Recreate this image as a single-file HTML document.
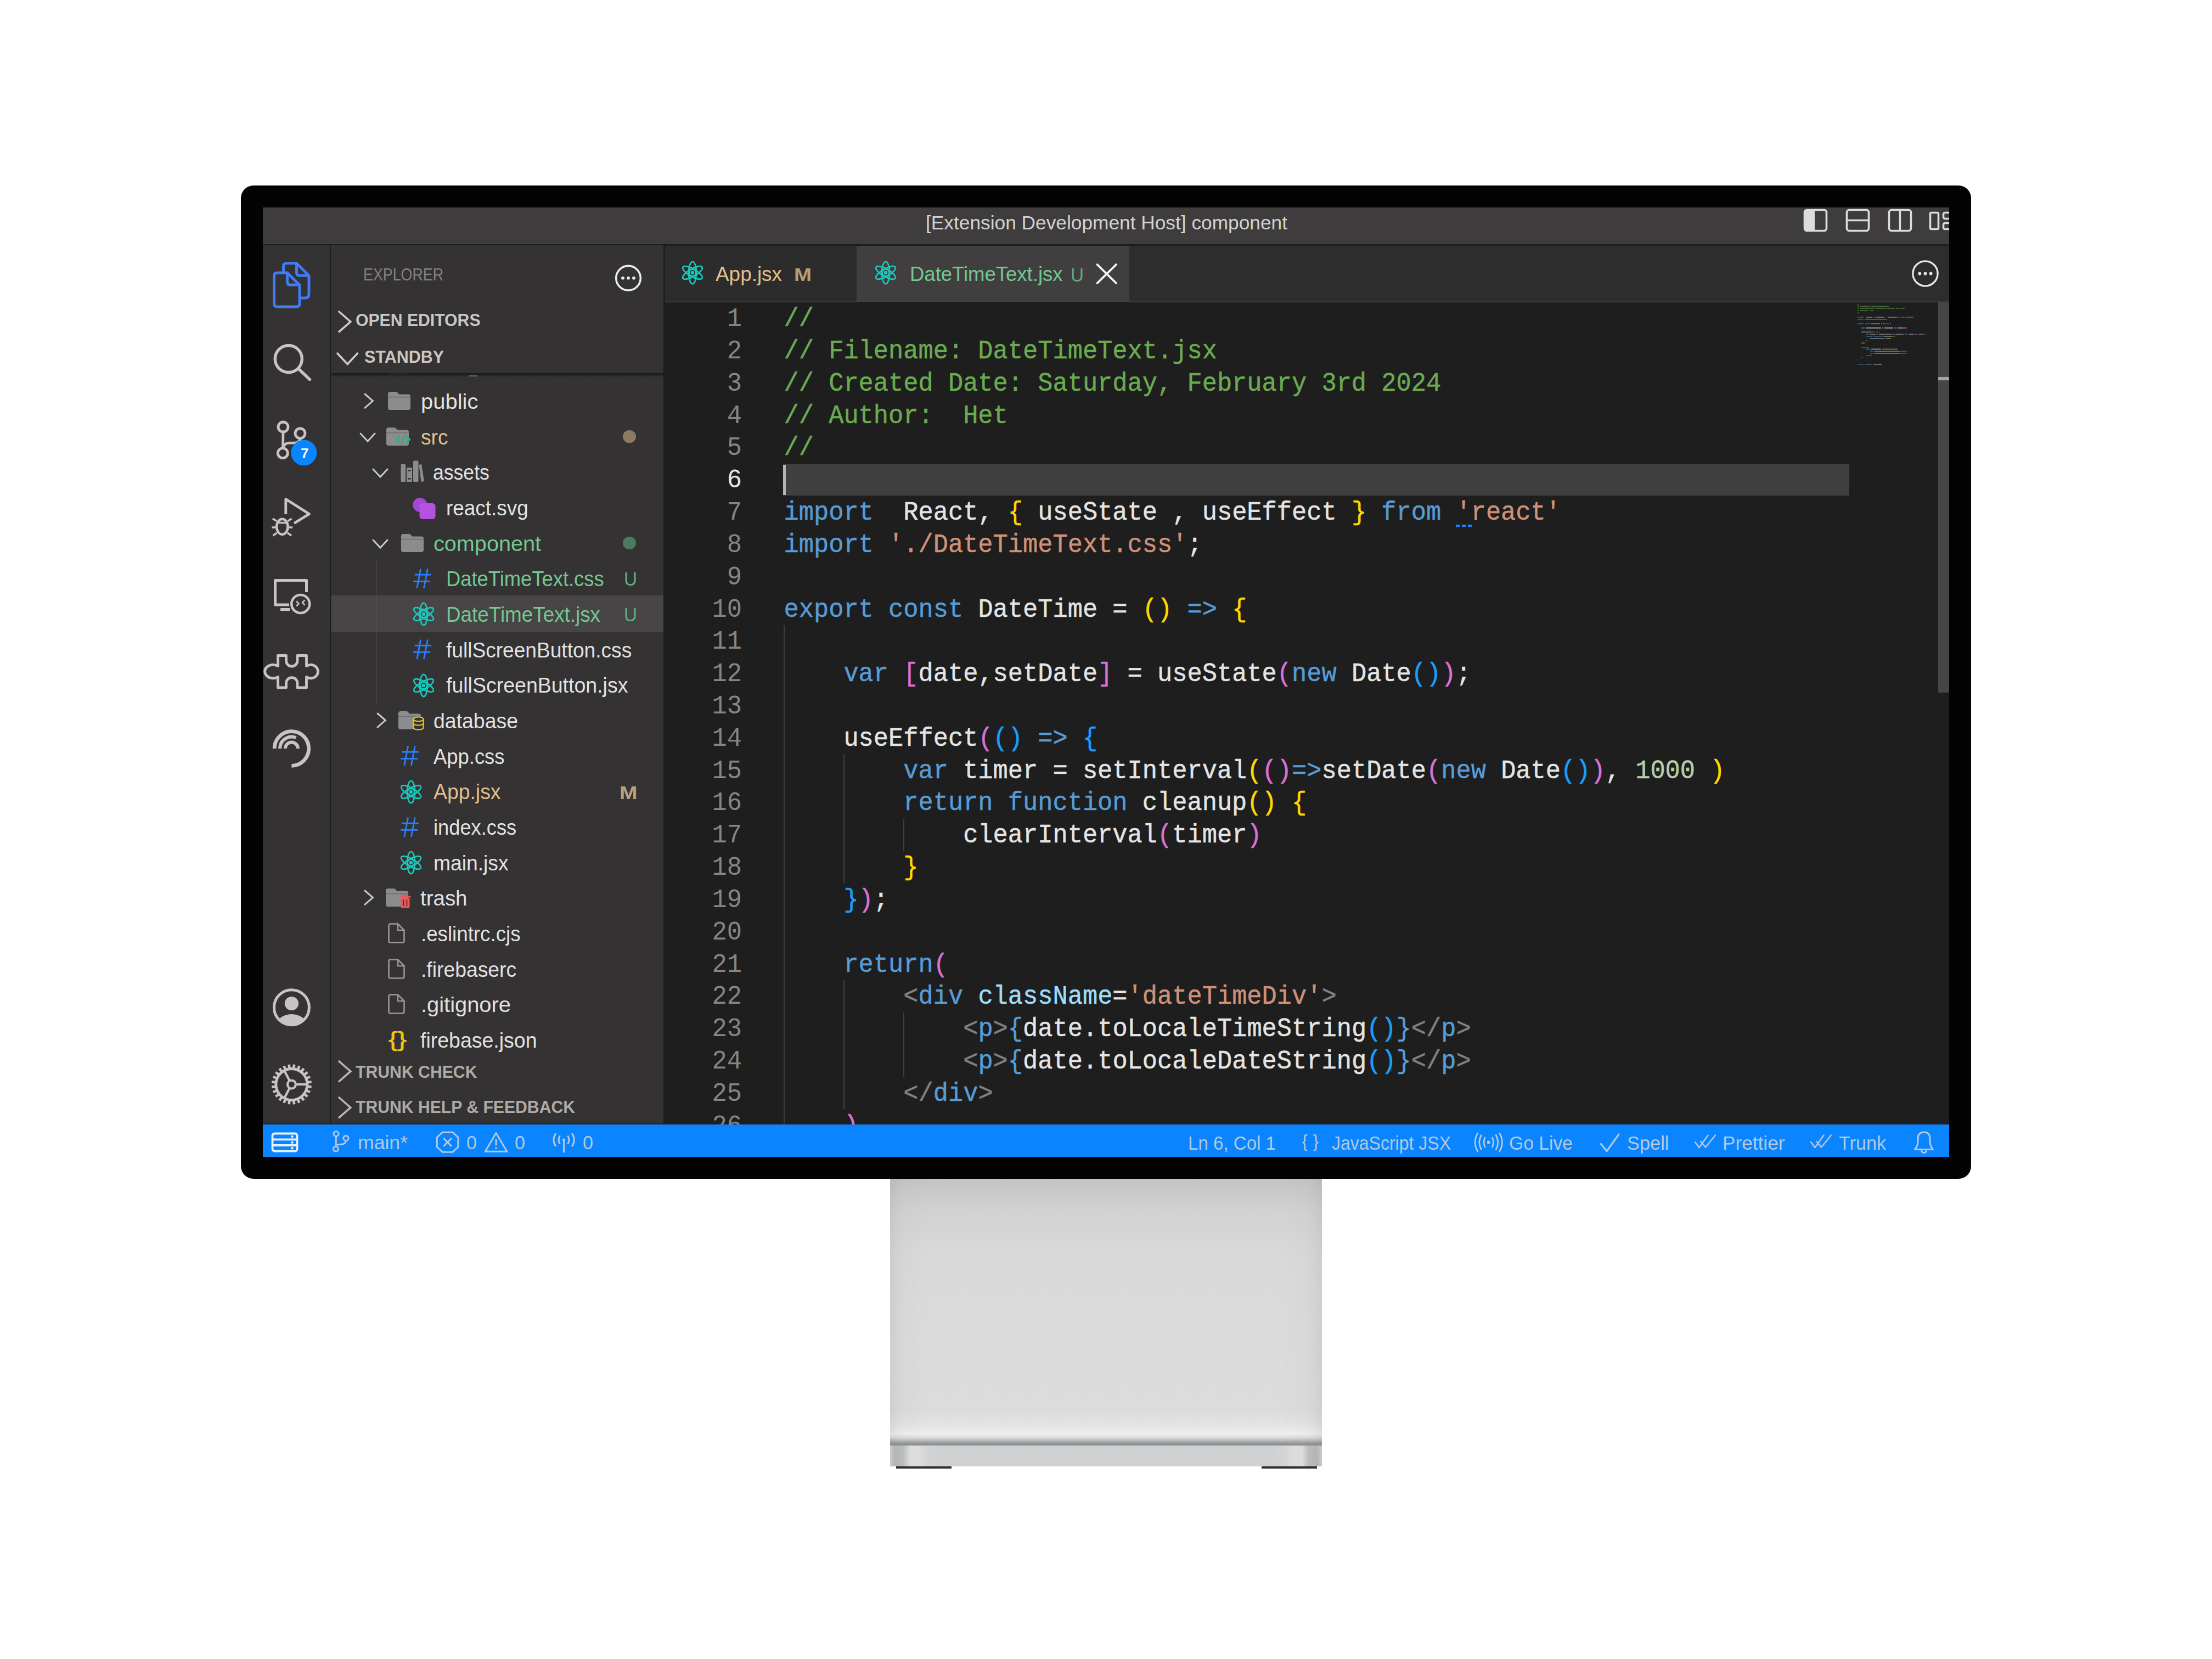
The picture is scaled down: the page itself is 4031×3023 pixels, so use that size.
<!DOCTYPE html>
<html lang="en"><head><meta charset="utf-8"><title>component - Visual Studio Code</title>
<style>
html,body{margin:0;padding:0;background:#fff}
body{width:4031px;height:3023px;position:relative;overflow:hidden;font-family:"Liberation Sans",sans-serif}
.b{position:absolute;display:block}
.t{position:absolute;white-space:pre;line-height:1;transform-origin:0 0;display:block}
.c{position:absolute;left:1428.5px;white-space:pre;line-height:1;font-family:"Liberation Mono",monospace;font-size:45.362px;-webkit-text-stroke:.5px;transform:scaleY(1.07);transform-origin:0 76.68%}
.n{position:absolute;left:1211.5px;width:140.5px;text-align:right;white-space:pre;line-height:1;font-family:"Liberation Mono",monospace;font-size:45.362px;color:#858585;transform:scaleY(1.07);transform-origin:0 76.68%}
</style></head>
<body>
<div class="b" style="left:1622px;top:2140px;width:787px;height:491px;background:linear-gradient(180deg,#bfc0c1 0%,#c6c7c8 4%,#d2d2d3 14%,#d9d9da 30%,#dbdbdc 60%,#dcdcdd 88%,#e4e4e4 93%,#efefef 96.3%,#dadada 97.8%,#a6a7a8 99.3%,#8f9192 100%);"></div>
<div class="b" style="left:1622px;top:2140px;width:787px;height:491px;background:linear-gradient(90deg,rgba(120,120,122,.13) 0%,rgba(150,150,152,.05) 3%,rgba(255,255,255,0) 9%,rgba(255,255,255,0) 91%,rgba(150,150,152,.05) 97%,rgba(120,120,122,.13) 100%);"></div>
<div class="b" style="left:1622px;top:2631px;width:787px;height:41px;background:linear-gradient(90deg,#c9cacb 0%,#b3b5b6 1.2%,#b9bbbc 3%,#dbdcdc 4.6%,#dcdcdd 6.5%,#d2d3d4 9%,#cfd0d1 13%,#cfd0d1 87%,#d2d3d4 91%,#dcdcdd 93.5%,#dbdcdc 95.4%,#b9bbbc 97%,#b3b5b6 98.8%,#c9cacb 100%);"></div>
<div class="b" style="left:1622px;top:2631px;width:787px;height:3px;background:#8f9091;"></div>
<div class="b" style="left:1633px;top:2672px;width:101px;height:4px;background:#2e2e30;"></div>
<div class="b" style="left:2299px;top:2672px;width:101px;height:4px;background:#2e2e30;"></div>
<div class="b" style="left:439px;top:338px;width:3153px;height:1810px;background:#030303;border-radius:23px;"></div>
<div class="b" style="left:479.3px;top:378px;width:3072.3px;height:1729.6px;background:#1e1e1e;"></div>
<div class="b" style="left:479.3px;top:378px;width:3072.3px;height:67px;background:#3e3c3d;"></div>
<div class="b" style="left:479.3px;top:445px;width:3072.3px;height:2.4px;background:#1f1e1e;"></div>
<div class="b" style="left:479.3px;top:447.4px;width:121.4px;height:1601.6px;background:#343233;"></div>
<div class="b" style="left:600.7px;top:447.4px;width:2.1px;height:1601.6px;background:#1f1e1e;"></div>
<div class="b" style="left:602.8px;top:447.4px;width:606.2px;height:1601.6px;background:#343233;"></div>
<div class="b" style="left:1208.8px;top:447.4px;width:2.7px;height:1601.6px;background:#1b1a1a;"></div>
<div class="b" style="left:1211.5px;top:447.5px;width:2340px;height:102.5px;background:#2d2d2d;"></div>
<div class="b" style="left:1211.5px;top:548.5px;width:2340px;height:2.5px;background:#3a3939;"></div>
<div class="b" style="left:1211.5px;top:447.5px;width:349.5px;height:101px;background:#2c2c2c;"></div>
<div class="b" style="left:1561px;top:447.5px;width:497px;height:102px;background:#403e3f;"></div>
<div class="b" style="left:1561px;top:549.5px;width:497px;height:1.5px;background:#2a2929;"></div>
<div class="b" style="left:479.3px;top:2047px;width:732px;height:2.2px;background:#232222;"></div>
<div class="b" style="left:479.3px;top:2049px;width:3072.3px;height:58.6px;background:#0a84ff;"></div>
<svg class="b" style="left:490px;top:470px" width="85" height="100" viewBox="490 470 85 100"><g fill="none" stroke="#3f7cf6" stroke-width="4.9" stroke-linejoin="round" stroke-linecap="round"><path d="M516.5 494 L516.5 485 Q516.5 479.8 522 479.8 L540.5 479.8 L563 502.5 L563 536 Q563 543 556 543 L550 543"/><path d="M540.5 480.5 L540.5 497 Q540.5 502 545.5 502 L562 502"/><path d="M505.5 497 L523.5 497 L546 519.5 L546 553 Q546 559 540 559 L505.5 559 Q499.5 559 499.5 553 L499.5 503 Q499.5 497 505.5 497 Z"/><path d="M523.5 497.5 L523.5 514 Q523.5 519 528.5 519 L545.5 519"/></g></svg>
<svg class="b" style="left:490px;top:620px" width="90" height="80" viewBox="490 620 90 80"><g fill="none" stroke="#c7c5c3" stroke-width="5.4" stroke-linecap="round"><circle cx="525.8" cy="654" r="24.5"/><path d="M544 672 L564.5 691.5"/></g></svg>
<svg class="b" style="left:495px;top:760px" width="90" height="95" viewBox="495 760 90 95"><g fill="none" stroke="#c7c5c3" stroke-width="4.8"><circle cx="516" cy="778" r="9"/><circle cx="547" cy="789.6" r="9"/><circle cx="515.3" cy="825.7" r="9"/><path d="M516 787 L515.5 816.5"/><path d="M547.3 798.6 Q546 807.2 536 807.2 L527 807.2 Q517 807.6 516 817"/></g><circle cx="553.8" cy="825" r="23.5" fill="#0a84ff"/></svg>
<svg class="b" style="left:490px;top:895px" width="90" height="90" viewBox="490 895 90 90"><g fill="none" stroke="#c7c5c3" stroke-width="4.8" stroke-linejoin="round" stroke-linecap="butt"><path d="M520.8 937 L520.8 909.5 L563.5 936.5 L536 953.5"/><ellipse cx="514.3" cy="959.8" rx="10.2" ry="14" stroke-width="4.4"/><path d="M504 949.5 L497 945 M504 961 L495.5 961 M504.5 971 L497.5 976 M524.5 949.5 L531.5 945 M524.5 961 L533 961 M524 971 L531 976" stroke-width="3.6"/><path d="M505 952.5 L523.5 952.5" stroke-width="3.4"/></g></svg>
<svg class="b" style="left:490px;top:1045px" width="90" height="80" viewBox="490 1045 90 80"><g fill="none" stroke="#c7c5c3" stroke-width="5" stroke-linejoin="round"><path d="M527 1102 L501.5 1102 L501.5 1057.5 L558.5 1057.5 L558.5 1079"/><path d="M511 1110.5 L528 1110.5"/><circle cx="547.7" cy="1100.5" r="16.5" stroke-width="4.6"/><path d="M540 1095.5 L544.5 1100 L540 1104.5 M555.5 1093.5 L551 1098 L555.5 1102.5" stroke-width="2.6"/></g></svg>
<svg class="b" style="left:475px;top:1183px" width="115" height="80" viewBox="475 1183 115 80"><path fill="none" stroke="#c7c5c3" stroke-width="4.8" stroke-linejoin="round" d="M506.5 1194.5 L521.5 1194.5 L521.5 1204 A10.2 10.2 0 0 0 541.9 1204 L541.9 1194.5 L558.5 1194.5 L558.5 1213.7 A13.2 12.3 0 1 1 558.5 1233.5 L558.5 1253 L541.9 1253 L541.9 1244.8 A10.2 10.2 0 0 0 521.5 1244.8 L521.5 1253 L506.5 1253 L506.5 1233.5 A15 12.3 0 1 1 506.5 1213.7 Z"/></svg>
<svg class="b" style="left:490px;top:1320px" width="90" height="90" viewBox="490 1320 90 90"><path d="M500.1 1364.0 A31.3 31.3 0 1 1 531.4 1395.3" fill="none" stroke="#c7c5c3" stroke-width="6.8"/><path d="M510.1 1364.0 A21.3 21.3 0 0 1 539.4 1344.3" fill="none" stroke="#c7c5c3" stroke-width="6"/><path d="M519.8 1364.0 A11.6 11.6 0 0 1 543.0 1364.0" fill="none" stroke="#c7c5c3" stroke-width="6"/></svg>
<svg class="b" style="left:490px;top:1795px" width="85" height="85" viewBox="490 1795 85 85"><defs><clipPath id="acc"><circle cx="531.4" cy="1835.7" r="30"/></clipPath></defs><circle cx="531.4" cy="1835.7" r="32" fill="none" stroke="#c7c5c3" stroke-width="5"/><circle cx="531.4" cy="1828.5" r="12.6" fill="#c7c5c3"/><ellipse cx="531.4" cy="1871" rx="29" ry="23" fill="#c7c5c3" clip-path="url(#acc)"/></svg>
<svg class="b" style="left:490px;top:1935px" width="85" height="85" viewBox="490 1935 85 85"><g fill="none" stroke="#c7c5c3"><circle cx="531.4" cy="1976" r="28.5" stroke-width="4.8"/><path d="M561.1 1979.9 L567.6 1980.8 M559.1 1987.5 L565.1 1990.0 M555.2 1994.3 L560.4 1998.2 M549.7 1999.8 L553.6 2005.0 M542.9 2003.7 L545.4 2009.7 M535.3 2005.7 L536.2 2012.2 M527.5 2005.7 L526.6 2012.2 M519.9 2003.7 L517.4 2009.7 M513.1 1999.8 L509.2 2005.0 M507.6 1994.3 L502.4 1998.2 M503.7 1987.5 L497.7 1990.0 M501.7 1979.9 L495.2 1980.8 M501.7 1972.1 L495.2 1971.2 M503.7 1964.5 L497.7 1962.0 M507.6 1957.7 L502.4 1953.8 M513.1 1952.2 L509.2 1947.0 M519.9 1948.3 L517.4 1942.3 M527.5 1946.3 L526.6 1939.8 M535.3 1946.3 L536.2 1939.8 M542.9 1948.3 L545.4 1942.3 M549.7 1952.2 L553.6 1947.0 M555.2 1957.7 L560.4 1953.8 M559.1 1964.5 L565.1 1962.0 M561.1 1972.1 L567.6 1971.2 " stroke-width="4.6"/><circle cx="531.4" cy="1976" r="7.5" stroke-width="4"/><path d="M539.4 1976.0 L559.4 1976.0 M527.6 1983.1 L518.3 2000.7 M527.6 1968.9 L518.3 1951.3 " stroke-width="4.2"/></g></svg>
<svg class="b" style="left:1119px;top:481px" width="52" height="52" viewBox="0 0 52 52"><circle cx="26" cy="25.7" r="22.3" fill="none" stroke="#ececec" stroke-width="3.6"/><circle cx="16" cy="25.7" r="2.9" fill="#ececec"/><circle cx="26" cy="25.7" r="2.9" fill="#ececec"/><circle cx="36" cy="25.7" r="2.9" fill="#ececec"/></svg>
<svg class="b" style="left:614.6px;top:564.8px" width="26.8" height="42.4" viewBox="0 0 26.8 42.4"><path d="M3 3 L23.8 21.2 L3 39.4" fill="none" stroke="#cfcbc6" stroke-width="3.6" stroke-linecap="round" stroke-linejoin="miter"/></svg>
<svg class="b" style="left:611.8px;top:640.75px" width="42.4" height="25.5" viewBox="0 0 42.4 25.5"><path d="M3 3 L21.2 22.5 L39.4 3" fill="none" stroke="#cfcbc6" stroke-width="3.6" stroke-linecap="round" stroke-linejoin="miter"/></svg>
<div class="b" style="left:603.5px;top:680px;width:605.5px;height:7px;background:linear-gradient(180deg,#1c1b1b 0%,#242323 50%,rgba(52,50,51,0) 100%);"></div>
<div class="b" style="left:711px;top:680.6px;width:34px;height:1.8px;background:#5e5c5b;"></div>
<div class="b" style="left:853.5px;top:684.3px;width:16.5px;height:2px;background:#6b6967;"></div>
<div class="b" style="left:603.5px;top:1084.5px;width:605.5px;height:67px;background:#474546;"></div>
<div class="b" style="left:684.7px;top:1021px;width:1.7px;height:260px;background:#565455;"></div>
<svg class="b" style="left:661.8px;top:715.1px" width="20.4" height="31.2" viewBox="0 0 20.4 31.2"><path d="M3 3 L17.4 15.6 L3 28.2" fill="none" stroke="#c9c9c9" stroke-width="3" stroke-linecap="round" stroke-linejoin="miter"/></svg>
<svg class="b" style="left:707px;top:714.1px" width="41" height="33" viewBox="0 0 41 33"><path d="M0 4 Q0 0 4 0 L14 0 Q17 0 18.5 2.2 L20 4.5 L37 4.5 Q41 4.5 41 8.5 L41 29 Q41 33 37 33 L4 33 Q0 33 0 29 Z" fill="#8c8c8e"/><path d="M0 9.6 L41 9.6" stroke="#707072" stroke-width="1.6"/></svg>
<svg class="b" style="left:653.98px;top:787.375px" width="32.04" height="19.95" viewBox="0 0 32.04 19.95"><path d="M3 3 L16.02 16.95 L29.04 3" fill="none" stroke="#c9c9c9" stroke-width="3" stroke-linecap="round" stroke-linejoin="miter"/></svg>
<svg class="b" style="left:703.5px;top:778.75px" width="41" height="33" viewBox="0 0 41 33"><path d="M0 4 Q0 0 4 0 L14 0 Q17 0 18.5 2.2 L20 4.5 L37 4.5 Q41 4.5 41 8.5 L41 29 Q41 33 37 33 L4 33 Q0 33 0 29 Z" fill="#8c8c8e"/><path d="M0 9.6 L41 9.6" stroke="#707072" stroke-width="1.6"/></svg>
<div class="b" style="left:1135px;top:783.85px;width:23.5px;height:23.5px;background:#8d7b60;border-radius:50%;"></div>
<svg class="b" style="left:677.48px;top:852.025px" width="32.04" height="19.95" viewBox="0 0 32.04 19.95"><path d="M3 3 L16.02 16.95 L29.04 3" fill="none" stroke="#c9c9c9" stroke-width="3" stroke-linecap="round" stroke-linejoin="miter"/></svg>
<svg class="b" style="left:751px;top:906.65px" width="44" height="40" viewBox="0 0 44 40"><circle cx="14.3" cy="13" r="13" fill="#a744da"/><rect x="13.5" y="10" width="29" height="29" rx="5.5" fill="#b652e2"/></svg>
<svg class="b" style="left:677.48px;top:981.325px" width="32.04" height="19.95" viewBox="0 0 32.04 19.95"><path d="M3 3 L16.02 16.95 L29.04 3" fill="none" stroke="#c9c9c9" stroke-width="3" stroke-linecap="round" stroke-linejoin="miter"/></svg>
<svg class="b" style="left:730.5px;top:972.7px" width="41" height="33" viewBox="0 0 41 33"><path d="M0 4 Q0 0 4 0 L14 0 Q17 0 18.5 2.2 L20 4.5 L37 4.5 Q41 4.5 41 8.5 L41 29 Q41 33 37 33 L4 33 Q0 33 0 29 Z" fill="#8c8c8e"/><path d="M0 9.6 L41 9.6" stroke="#707072" stroke-width="1.6"/></svg>
<div class="b" style="left:1135px;top:977.8px;width:23.5px;height:23.5px;background:#4c7a5d;border-radius:50%;"></div>
<svg class="b" style="left:752.6px;top:1035.95px" width="34" height="37" viewBox="0 0 34 37"><g stroke="#2b7fff" stroke-width="2.8" stroke-linecap="butt" fill="none"><path d="M13.6 0.4 L6.8 36"/><path d="M26.2 0.4 L19.4 36"/><path d="M2.7 11.2 L33 11.2"/><path d="M0 23.4 L31.2 23.4"/></g></svg>
<svg class="b" style="left:748px;top:1094.4px" width="48" height="50" viewBox="0 0 48 50"><g transform="translate(24,25)"><ellipse rx="20.2" ry="7" fill="none" stroke="#1cc7ba" stroke-width="2.7" transform="rotate(90)"/><ellipse rx="20.2" ry="7" fill="none" stroke="#1cc7ba" stroke-width="2.7" transform="rotate(30)"/><ellipse rx="20.2" ry="7" fill="none" stroke="#1cc7ba" stroke-width="2.7" transform="rotate(150)"/><circle r="6.2" fill="none" stroke="#1cc7ba" stroke-width="2.2"/><circle r="3.3" fill="#1cc7ba"/></g></svg>
<svg class="b" style="left:752.6px;top:1165.25px" width="34" height="37" viewBox="0 0 34 37"><g stroke="#2b7fff" stroke-width="2.8" stroke-linecap="butt" fill="none"><path d="M13.6 0.4 L6.8 36"/><path d="M26.2 0.4 L19.4 36"/><path d="M2.7 11.2 L33 11.2"/><path d="M0 23.4 L31.2 23.4"/></g></svg>
<svg class="b" style="left:748px;top:1223.7px" width="48" height="50" viewBox="0 0 48 50"><g transform="translate(24,25)"><ellipse rx="20.2" ry="7" fill="none" stroke="#1cc7ba" stroke-width="2.7" transform="rotate(90)"/><ellipse rx="20.2" ry="7" fill="none" stroke="#1cc7ba" stroke-width="2.7" transform="rotate(30)"/><ellipse rx="20.2" ry="7" fill="none" stroke="#1cc7ba" stroke-width="2.7" transform="rotate(150)"/><circle r="6.2" fill="none" stroke="#1cc7ba" stroke-width="2.2"/><circle r="3.3" fill="#1cc7ba"/></g></svg>
<svg class="b" style="left:685.3px;top:1296.95px" width="20.4" height="31.2" viewBox="0 0 20.4 31.2"><path d="M3 3 L17.4 15.6 L3 28.2" fill="none" stroke="#c9c9c9" stroke-width="3" stroke-linecap="round" stroke-linejoin="miter"/></svg>
<svg class="b" style="left:726px;top:1295.95px" width="41" height="33" viewBox="0 0 41 33"><path d="M0 4 Q0 0 4 0 L14 0 Q17 0 18.5 2.2 L20 4.5 L37 4.5 Q41 4.5 41 8.5 L41 29 Q41 33 37 33 L4 33 Q0 33 0 29 Z" fill="#8c8c8e"/><path d="M0 9.6 L41 9.6" stroke="#707072" stroke-width="1.6"/></svg>
<svg class="b" style="left:729.6px;top:1359.2px" width="34" height="37" viewBox="0 0 34 37"><g stroke="#2b7fff" stroke-width="2.8" stroke-linecap="butt" fill="none"><path d="M13.6 0.4 L6.8 36"/><path d="M26.2 0.4 L19.4 36"/><path d="M2.7 11.2 L33 11.2"/><path d="M0 23.4 L31.2 23.4"/></g></svg>
<svg class="b" style="left:724.5px;top:1417.65px" width="48" height="50" viewBox="0 0 48 50"><g transform="translate(24,25)"><ellipse rx="20.2" ry="7" fill="none" stroke="#1cc7ba" stroke-width="2.7" transform="rotate(90)"/><ellipse rx="20.2" ry="7" fill="none" stroke="#1cc7ba" stroke-width="2.7" transform="rotate(30)"/><ellipse rx="20.2" ry="7" fill="none" stroke="#1cc7ba" stroke-width="2.7" transform="rotate(150)"/><circle r="6.2" fill="none" stroke="#1cc7ba" stroke-width="2.2"/><circle r="3.3" fill="#1cc7ba"/></g></svg>
<svg class="b" style="left:729.6px;top:1488.5px" width="34" height="37" viewBox="0 0 34 37"><g stroke="#2b7fff" stroke-width="2.8" stroke-linecap="butt" fill="none"><path d="M13.6 0.4 L6.8 36"/><path d="M26.2 0.4 L19.4 36"/><path d="M2.7 11.2 L33 11.2"/><path d="M0 23.4 L31.2 23.4"/></g></svg>
<svg class="b" style="left:724.5px;top:1546.95px" width="48" height="50" viewBox="0 0 48 50"><g transform="translate(24,25)"><ellipse rx="20.2" ry="7" fill="none" stroke="#1cc7ba" stroke-width="2.7" transform="rotate(90)"/><ellipse rx="20.2" ry="7" fill="none" stroke="#1cc7ba" stroke-width="2.7" transform="rotate(30)"/><ellipse rx="20.2" ry="7" fill="none" stroke="#1cc7ba" stroke-width="2.7" transform="rotate(150)"/><circle r="6.2" fill="none" stroke="#1cc7ba" stroke-width="2.2"/><circle r="3.3" fill="#1cc7ba"/></g></svg>
<svg class="b" style="left:661.8px;top:1620.2px" width="20.4" height="31.2" viewBox="0 0 20.4 31.2"><path d="M3 3 L17.4 15.6 L3 28.2" fill="none" stroke="#c9c9c9" stroke-width="3" stroke-linecap="round" stroke-linejoin="miter"/></svg>
<svg class="b" style="left:703px;top:1619.2px" width="41" height="33" viewBox="0 0 41 33"><path d="M0 4 Q0 0 4 0 L14 0 Q17 0 18.5 2.2 L20 4.5 L37 4.5 Q41 4.5 41 8.5 L41 29 Q41 33 37 33 L4 33 Q0 33 0 29 Z" fill="#8c8c8e"/><path d="M0 9.6 L41 9.6" stroke="#707072" stroke-width="1.6"/></svg>
<svg class="b" style="left:707px;top:1681.95px" width="31" height="37" viewBox="0 0 31 37"><path d="M4.5 1.5 L18 1.5 L29.5 13 L29.5 32.5 Q29.5 35.5 26.5 35.5 L4.5 35.5 Q1.5 35.5 1.5 32.5 L1.5 4.5 Q1.5 1.5 4.5 1.5 Z" fill="none" stroke="#9a9692" stroke-width="2.6" stroke-linejoin="round"/><path d="M18 1.5 L18 13 L29.5 13" fill="none" stroke="#9a9692" stroke-width="2.6" stroke-linejoin="round"/></svg>
<svg class="b" style="left:707px;top:1746.6px" width="31" height="37" viewBox="0 0 31 37"><path d="M4.5 1.5 L18 1.5 L29.5 13 L29.5 32.5 Q29.5 35.5 26.5 35.5 L4.5 35.5 Q1.5 35.5 1.5 32.5 L1.5 4.5 Q1.5 1.5 4.5 1.5 Z" fill="none" stroke="#9a9692" stroke-width="2.6" stroke-linejoin="round"/><path d="M18 1.5 L18 13 L29.5 13" fill="none" stroke="#9a9692" stroke-width="2.6" stroke-linejoin="round"/></svg>
<svg class="b" style="left:707px;top:1811.25px" width="31" height="37" viewBox="0 0 31 37"><path d="M4.5 1.5 L18 1.5 L29.5 13 L29.5 32.5 Q29.5 35.5 26.5 35.5 L4.5 35.5 Q1.5 35.5 1.5 32.5 L1.5 4.5 Q1.5 1.5 4.5 1.5 Z" fill="none" stroke="#9a9692" stroke-width="2.6" stroke-linejoin="round"/><path d="M18 1.5 L18 13 L29.5 13" fill="none" stroke="#9a9692" stroke-width="2.6" stroke-linejoin="round"/></svg>
<svg class="b" style="left:720px;top:791.85px" width="30" height="18" viewBox="0 0 30 18"><g fill="none" stroke="#28b07c" stroke-width="3" stroke-linecap="round" stroke-linejoin="round"><path d="M8 3 L2 9 L8 15"/><path d="M21 3 L27 9 L21 15"/><path d="M17 2 L12 16"/></g></svg>
<svg class="b" style="left:729.5px;top:838.5px" width="43" height="40" viewBox="0 0 43 40"><g fill="#8c8c8e"><rect x="0.5" y="6.5" width="8.5" height="32.5" rx="1.5"/><rect x="11" y="13" width="10" height="26" rx="1.5"/><rect x="23" y="0.5" width="9.5" height="38.5" rx="2"/><path d="M33.5 8 L38 6.8 L43 38 L37.5 39 Z"/></g><rect x="13.3" y="17" width="5.4" height="2.6" fill="#343233"/><rect x="13.3" y="32" width="5.4" height="2.6" fill="#343233"/></svg>
<svg class="b" style="left:751.5px;top:1305.05px" width="21" height="26" viewBox="0 0 21 26"><g fill="#343233" stroke="#e7c81d" stroke-width="2.2"><path d="M1.5 5.5 L1.5 20.5 Q1.5 24.5 10.5 24.5 Q19.5 24.5 19.5 20.5 L19.5 5.5"/><ellipse cx="10.5" cy="5.5" rx="9" ry="4"/><path d="M1.5 12.5 Q1.5 16.5 10.5 16.5 Q19.5 16.5 19.5 12.5" fill="none"/></g></svg>
<svg class="b" style="left:728px;top:1629.8px" width="21" height="25" viewBox="0 0 21 25"><g fill="#e8585a"><rect x="2.5" y="6" width="16" height="18.5" rx="2.5"/><rect x="0.5" y="2.5" width="20" height="3" rx="1"/><rect x="6.5" y="0" width="8" height="3" rx="1"/></g><g stroke="#343233" stroke-width="1.6"><path d="M7.5 9.5 L7.5 21"/><path d="M13.5 9.5 L13.5 21"/></g></svg>
<svg class="b" style="left:614.6px;top:1931.3px" width="26.8" height="42.4" viewBox="0 0 26.8 42.4"><path d="M3 3 L23.8 21.2 L3 39.4" fill="none" stroke="#b9b5b1" stroke-width="3.6" stroke-linecap="round" stroke-linejoin="miter"/></svg>
<svg class="b" style="left:614.6px;top:1997.3px" width="26.8" height="42.4" viewBox="0 0 26.8 42.4"><path d="M3 3 L23.8 21.2 L3 39.4" fill="none" stroke="#b9b5b1" stroke-width="3.6" stroke-linecap="round" stroke-linejoin="miter"/></svg>
<svg class="b" style="left:3285px;top:379px" width="48" height="46" viewBox="0 0 48 46"><rect x="3.5" y="3.5" width="40" height="38" rx="4.5" fill="none" stroke="#dcdcdc" stroke-width="3.6"/><path d="M3.5 8 Q3.5 3.5 8 3.5 L22 3.5 L22 41.5 L8 41.5 Q3.5 41.5 3.5 37 Z" fill="#dcdcdc"/></svg>
<svg class="b" style="left:3362px;top:379px" width="48" height="46" viewBox="0 0 48 46"><rect x="3.5" y="3.5" width="40" height="38" rx="4.5" fill="none" stroke="#dcdcdc" stroke-width="3.6"/><path d="M3.5 22.5 L43.5 22.5" stroke="#dcdcdc" stroke-width="3.4"/></svg>
<svg class="b" style="left:3439px;top:379px" width="48" height="46" viewBox="0 0 48 46"><rect x="3.5" y="3.5" width="40" height="38" rx="4.5" fill="none" stroke="#dcdcdc" stroke-width="3.6"/><path d="M23.5 3.5 L23.5 41.5" stroke="#dcdcdc" stroke-width="3.4"/></svg>
<div class="b" style="left:3512px;top:379px;width:40px;height:50px;overflow:hidden"><svg width="60" height="50" viewBox="0 0 60 50"><g fill="none" stroke="#dcdcdc" stroke-width="3.6"><rect x="5.5" y="8.5" width="15" height="30" rx="2"/><rect x="29.5" y="8.5" width="20" height="11" rx="3"/><rect x="29.5" y="27.5" width="20" height="11" rx="3"/></g></svg></div>
<svg class="b" style="left:1238px;top:471.6px" width="48" height="50" viewBox="0 0 48 50"><g transform="translate(24,25)"><ellipse rx="20.2" ry="7" fill="none" stroke="#1cc7ba" stroke-width="2.7" transform="rotate(90)"/><ellipse rx="20.2" ry="7" fill="none" stroke="#1cc7ba" stroke-width="2.7" transform="rotate(30)"/><ellipse rx="20.2" ry="7" fill="none" stroke="#1cc7ba" stroke-width="2.7" transform="rotate(150)"/><circle r="6.2" fill="none" stroke="#1cc7ba" stroke-width="2.2"/><circle r="3.3" fill="#1cc7ba"/></g></svg>
<svg class="b" style="left:1590px;top:471.6px" width="48" height="50" viewBox="0 0 48 50"><g transform="translate(24,25)"><ellipse rx="20.2" ry="7" fill="none" stroke="#1cc7ba" stroke-width="2.7" transform="rotate(90)"/><ellipse rx="20.2" ry="7" fill="none" stroke="#1cc7ba" stroke-width="2.7" transform="rotate(30)"/><ellipse rx="20.2" ry="7" fill="none" stroke="#1cc7ba" stroke-width="2.7" transform="rotate(150)"/><circle r="6.2" fill="none" stroke="#1cc7ba" stroke-width="2.2"/><circle r="3.3" fill="#1cc7ba"/></g></svg>
<svg class="b" style="left:1992px;top:475px" width="50" height="48" viewBox="0 0 50 48"><path d="M7.5 7 L42 41 M42 7 L7.5 41" stroke="#f4f4f4" stroke-width="3.8" stroke-linecap="round"/></svg>
<svg class="b" style="left:3482px;top:472px" width="54" height="54" viewBox="0 0 54 54"><circle cx="26.5" cy="26.5" r="22.6" fill="none" stroke="#e6e6e6" stroke-width="3.4"/><circle cx="16.3" cy="26.5" r="2.9" fill="#e6e6e6"/><circle cx="26.5" cy="26.5" r="2.9" fill="#e6e6e6"/><circle cx="36.7" cy="26.5" r="2.9" fill="#e6e6e6"/></svg>
<div class="b" style="left:1427px;top:845px;width:1943px;height:57.5px;background:#414041;"></div>
<div class="b" style="left:1427px;top:846.5px;width:5.2px;height:55px;background:#b4b4b2;"></div>
<div class="b" style="left:1211.5px;top:551px;width:2340px;height:1498px;overflow:hidden"><div style="position:absolute;left:-1211.5px;top:-551px">
<div class="b" style="left:1428px;top:1138.9px;width:2px;height:999.92px;background:#3f3f3f;"></div>
<div class="b" style="left:1536.87px;top:1374.18px;width:2px;height:235.26px;background:#3f3f3f;"></div>
<div class="b" style="left:1645.74px;top:1491.82px;width:2px;height:58.8px;background:#3f3f3f;"></div>
<div class="b" style="left:1536.87px;top:1785.92px;width:2px;height:235.26px;background:#3f3f3f;"></div>
<div class="b" style="left:1645.74px;top:1844.74px;width:2px;height:117.62px;background:#3f3f3f;"></div>
<div class="n" style="top:560.1px;">1</div>
<div class="c" style="top:560.1px"><span style="color:#6aab50">//</span></div>
<div class="n" style="top:618.9px;">2</div>
<div class="c" style="top:618.9px"><span style="color:#6aab50">// Filename: DateTimeText.jsx</span></div>
<div class="n" style="top:677.8px;">3</div>
<div class="c" style="top:677.8px"><span style="color:#6aab50">// Created Date: Saturday, February 3rd 2024</span></div>
<div class="n" style="top:736.6px;">4</div>
<div class="c" style="top:736.6px"><span style="color:#6aab50">// Author:  Het</span></div>
<div class="n" style="top:795.4px;">5</div>
<div class="c" style="top:795.4px"><span style="color:#6aab50">//</span></div>
<div class="n" style="top:854.2px;color:#e6e6e6;">6</div>
<div class="n" style="top:913.0px;">7</div>
<div class="c" style="top:913.0px"><span style="color:#569cd6">import</span><span style="color:#e4e4e4">  React, </span><span style="color:#ffd700">{</span><span style="color:#e4e4e4"> useState , useEffect </span><span style="color:#ffd700">}</span><span style="color:#569cd6"> from</span><span style="color:#ce9178"> 'react'</span></div>
<div class="n" style="top:971.9px;">8</div>
<div class="c" style="top:971.9px"><span style="color:#569cd6">import</span><span style="color:#ce9178"> './DateTimeText.css'</span><span style="color:#e4e4e4">;</span></div>
<div class="n" style="top:1030.7px;">9</div>
<div class="n" style="top:1089.5px;">10</div>
<div class="c" style="top:1089.5px"><span style="color:#569cd6">export const</span><span style="color:#e4e4e4"> DateTime = </span><span style="color:#ffd700">()</span><span style="color:#569cd6"> =&gt;</span><span style="color:#ffd700"> {</span></div>
<div class="n" style="top:1148.3px;">11</div>
<div class="n" style="top:1207.1px;">12</div>
<div class="c" style="top:1207.1px"><span style="color:#569cd6">    var</span><span style="color:#da70d6"> [</span><span style="color:#e4e4e4">date,setDate</span><span style="color:#da70d6">]</span><span style="color:#e4e4e4"> = useState</span><span style="color:#da70d6">(</span><span style="color:#569cd6">new</span><span style="color:#e4e4e4"> Date</span><span style="color:#179fff">()</span><span style="color:#da70d6">)</span><span style="color:#e4e4e4">;</span></div>
<div class="n" style="top:1266.0px;">13</div>
<div class="n" style="top:1324.8px;">14</div>
<div class="c" style="top:1324.8px"><span style="color:#e4e4e4">    useEffect</span><span style="color:#da70d6">(</span><span style="color:#179fff">()</span><span style="color:#569cd6"> =&gt;</span><span style="color:#179fff"> {</span></div>
<div class="n" style="top:1383.6px;">15</div>
<div class="c" style="top:1383.6px"><span style="color:#569cd6">        var</span><span style="color:#e4e4e4"> timer = setInterval</span><span style="color:#ffd700">(</span><span style="color:#da70d6">()</span><span style="color:#569cd6">=&gt;</span><span style="color:#e4e4e4">setDate</span><span style="color:#da70d6">(</span><span style="color:#569cd6">new</span><span style="color:#e4e4e4"> Date</span><span style="color:#179fff">()</span><span style="color:#da70d6">)</span><span style="color:#e4e4e4">, </span><span style="color:#b5cea8">1000</span><span style="color:#ffd700"> )</span></div>
<div class="n" style="top:1442.4px;">16</div>
<div class="c" style="top:1442.4px"><span style="color:#569cd6">        return function</span><span style="color:#e4e4e4"> cleanup</span><span style="color:#ffd700">()</span><span style="color:#ffd700"> {</span></div>
<div class="n" style="top:1501.2px;">17</div>
<div class="c" style="top:1501.2px"><span style="color:#e4e4e4">            clearInterval</span><span style="color:#da70d6">(</span><span style="color:#e4e4e4">timer</span><span style="color:#da70d6">)</span></div>
<div class="n" style="top:1560.1px;">18</div>
<div class="c" style="top:1560.1px"><span style="color:#ffd700">        }</span></div>
<div class="n" style="top:1618.9px;">19</div>
<div class="c" style="top:1618.9px"><span style="color:#179fff">    }</span><span style="color:#da70d6">)</span><span style="color:#e4e4e4">;</span></div>
<div class="n" style="top:1677.7px;">20</div>
<div class="n" style="top:1736.5px;">21</div>
<div class="c" style="top:1736.5px"><span style="color:#569cd6">    return</span><span style="color:#da70d6">(</span></div>
<div class="n" style="top:1795.3px;">22</div>
<div class="c" style="top:1795.3px"><span style="color:#808080">        &lt;</span><span style="color:#569cd6">div</span><span style="color:#9cdcfe"> className</span><span style="color:#e4e4e4">=</span><span style="color:#ce9178">'dateTimeDiv'</span><span style="color:#808080">&gt;</span></div>
<div class="n" style="top:1854.2px;">23</div>
<div class="c" style="top:1854.2px"><span style="color:#808080">            &lt;</span><span style="color:#569cd6">p</span><span style="color:#808080">&gt;</span><span style="color:#569cd6">{</span><span style="color:#e4e4e4">date.toLocaleTimeString</span><span style="color:#179fff">()</span><span style="color:#569cd6">}</span><span style="color:#808080">&lt;/</span><span style="color:#569cd6">p</span><span style="color:#808080">&gt;</span></div>
<div class="n" style="top:1913.0px;">24</div>
<div class="c" style="top:1913.0px"><span style="color:#808080">            &lt;</span><span style="color:#569cd6">p</span><span style="color:#808080">&gt;</span><span style="color:#569cd6">{</span><span style="color:#e4e4e4">date.toLocaleDateString</span><span style="color:#179fff">()</span><span style="color:#569cd6">}</span><span style="color:#808080">&lt;/</span><span style="color:#569cd6">p</span><span style="color:#808080">&gt;</span></div>
<div class="n" style="top:1971.8px;">25</div>
<div class="c" style="top:1971.8px"><span style="color:#808080">        &lt;/</span><span style="color:#569cd6">div</span><span style="color:#808080">&gt;</span></div>
<div class="n" style="top:2030.6px;">26</div>
<div class="c" style="top:2030.6px"><span style="color:#da70d6">    )</span></div>
</div></div>
<div class="b" style="left:2653px;top:955.5px;width:6.5px;height:4.4px;background:#1a85ff;"></div>
<div class="b" style="left:2664.2px;top:955.5px;width:6.5px;height:4.4px;background:#1a85ff;"></div>
<div class="b" style="left:2675.4px;top:955.5px;width:6.5px;height:4.4px;background:#1a85ff;"></div>
<div class="b" style="left:3531.5px;top:551px;width:20.5px;height:711px;background:#464646;"></div>
<div class="b" style="left:3531.5px;top:686.5px;width:20.5px;height:6.5px;background:#a3a3a3;"></div>
<div class="b" style="left:3384.5px;top:553.5px;width:3.94px;height:2.2px;background:rgba(106,171,80,.85);opacity:.55;"></div>
<div class="b" style="left:3384.5px;top:557.4px;width:3.94px;height:2.2px;background:rgba(106,171,80,.85);opacity:.55;"></div>
<div class="b" style="left:3390.41px;top:557.4px;width:17.73px;height:2.2px;background:rgba(106,171,80,.85);opacity:.55;"></div>
<div class="b" style="left:3410.11px;top:557.4px;width:31.52px;height:2.2px;background:rgba(106,171,80,.85);opacity:.55;"></div>
<div class="b" style="left:3384.5px;top:561.3px;width:3.94px;height:2.2px;background:rgba(106,171,80,.85);opacity:.55;"></div>
<div class="b" style="left:3390.41px;top:561.3px;width:25.61px;height:2.2px;background:rgba(106,171,80,.85);opacity:.55;"></div>
<div class="b" style="left:3417.99px;top:561.3px;width:17.73px;height:2.2px;background:rgba(106,171,80,.85);opacity:.55;"></div>
<div class="b" style="left:3437.69px;top:561.3px;width:15.76px;height:2.2px;background:rgba(106,171,80,.85);opacity:.55;"></div>
<div class="b" style="left:3455.42px;top:561.3px;width:5.91px;height:2.2px;background:rgba(106,171,80,.85);opacity:.55;"></div>
<div class="b" style="left:3463.3px;top:561.3px;width:7.88px;height:2.2px;background:rgba(106,171,80,.85);opacity:.55;"></div>
<div class="b" style="left:3384.5px;top:565.2px;width:3.94px;height:2.2px;background:rgba(106,171,80,.85);opacity:.55;"></div>
<div class="b" style="left:3390.41px;top:565.2px;width:13.79px;height:2.2px;background:rgba(106,171,80,.85);opacity:.55;"></div>
<div class="b" style="left:3408.14px;top:565.2px;width:5.91px;height:2.2px;background:rgba(106,171,80,.85);opacity:.55;"></div>
<div class="b" style="left:3384.5px;top:569.1px;width:3.94px;height:2.2px;background:rgba(106,171,80,.85);opacity:.55;"></div>
<div class="b" style="left:3384.5px;top:576.9px;width:11.82px;height:2.2px;background:rgba(66,130,190,.9);opacity:.55;"></div>
<div class="b" style="left:3400.26px;top:576.9px;width:11.82px;height:2.2px;background:rgba(200,200,200,.8);opacity:.55;"></div>
<div class="b" style="left:3414.05px;top:576.9px;width:1.97px;height:2.2px;background:rgba(220,190,40,.8);opacity:.55;"></div>
<div class="b" style="left:3417.99px;top:576.9px;width:15.76px;height:2.2px;background:rgba(200,200,200,.8);opacity:.55;"></div>
<div class="b" style="left:3439.66px;top:576.9px;width:17.73px;height:2.2px;background:rgba(200,200,200,.8);opacity:.55;"></div>
<div class="b" style="left:3459.36px;top:576.9px;width:1.97px;height:2.2px;background:rgba(220,190,40,.8);opacity:.55;"></div>
<div class="b" style="left:3463.3px;top:576.9px;width:7.88px;height:2.2px;background:rgba(66,130,190,.9);opacity:.55;"></div>
<div class="b" style="left:3473.15px;top:576.9px;width:13.79px;height:2.2px;background:rgba(190,130,105,.85);opacity:.55;"></div>
<div class="b" style="left:3384.5px;top:580.8px;width:11.82px;height:2.2px;background:rgba(66,130,190,.9);opacity:.55;"></div>
<div class="b" style="left:3398.29px;top:580.8px;width:39.4px;height:2.2px;background:rgba(190,130,105,.85);opacity:.55;"></div>
<div class="b" style="left:3384.5px;top:588.6px;width:11.82px;height:2.2px;background:rgba(66,130,190,.9);opacity:.55;"></div>
<div class="b" style="left:3398.29px;top:588.6px;width:9.85px;height:2.2px;background:rgba(66,130,190,.9);opacity:.55;"></div>
<div class="b" style="left:3410.11px;top:588.6px;width:15.76px;height:2.2px;background:rgba(200,200,200,.8);opacity:.55;"></div>
<div class="b" style="left:3427.84px;top:588.6px;width:1.97px;height:2.2px;background:rgba(200,200,200,.8);opacity:.55;"></div>
<div class="b" style="left:3431.78px;top:588.6px;width:3.94px;height:2.2px;background:rgba(220,190,40,.8);opacity:.55;"></div>
<div class="b" style="left:3437.69px;top:588.6px;width:3.94px;height:2.2px;background:rgba(66,130,190,.9);opacity:.55;"></div>
<div class="b" style="left:3443.6px;top:588.6px;width:1.97px;height:2.2px;background:rgba(220,190,40,.8);opacity:.55;"></div>
<div class="b" style="left:3392.38px;top:596.4px;width:5.91px;height:2.2px;background:rgba(66,130,190,.9);opacity:.55;"></div>
<div class="b" style="left:3400.26px;top:596.4px;width:27.58px;height:2.2px;background:rgba(200,200,200,.8);opacity:.55;"></div>
<div class="b" style="left:3429.81px;top:596.4px;width:1.97px;height:2.2px;background:rgba(200,200,200,.8);opacity:.55;"></div>
<div class="b" style="left:3433.75px;top:596.4px;width:15.76px;height:2.2px;background:rgba(200,200,200,.8);opacity:.55;"></div>
<div class="b" style="left:3451.48px;top:596.4px;width:5.91px;height:2.2px;background:rgba(66,130,190,.9);opacity:.55;"></div>
<div class="b" style="left:3459.36px;top:596.4px;width:7.88px;height:2.2px;background:rgba(200,200,200,.8);opacity:.55;"></div>
<div class="b" style="left:3467.24px;top:596.4px;width:7.88px;height:2.2px;background:rgba(190,100,190,.8);opacity:.55;"></div>
<div class="b" style="left:3392.38px;top:604.2px;width:17.73px;height:2.2px;background:rgba(200,200,200,.8);opacity:.55;"></div>
<div class="b" style="left:3410.11px;top:604.2px;width:5.91px;height:2.2px;background:rgba(190,100,190,.8);opacity:.55;"></div>
<div class="b" style="left:3417.99px;top:604.2px;width:3.94px;height:2.2px;background:rgba(66,130,190,.9);opacity:.55;"></div>
<div class="b" style="left:3423.9px;top:604.2px;width:1.97px;height:2.2px;background:rgba(66,130,190,.9);opacity:.55;"></div>
<div class="b" style="left:3400.26px;top:608.1px;width:5.91px;height:2.2px;background:rgba(66,130,190,.9);opacity:.55;"></div>
<div class="b" style="left:3408.14px;top:608.1px;width:9.85px;height:2.2px;background:rgba(200,200,200,.8);opacity:.55;"></div>
<div class="b" style="left:3419.96px;top:608.1px;width:1.97px;height:2.2px;background:rgba(200,200,200,.8);opacity:.55;"></div>
<div class="b" style="left:3423.9px;top:608.1px;width:21.67px;height:2.2px;background:rgba(200,200,200,.8);opacity:.55;"></div>
<div class="b" style="left:3445.57px;top:608.1px;width:9.85px;height:2.2px;background:rgba(190,100,190,.8);opacity:.55;"></div>
<div class="b" style="left:3455.42px;top:608.1px;width:13.79px;height:2.2px;background:rgba(200,200,200,.8);opacity:.55;"></div>
<div class="b" style="left:3471.18px;top:608.1px;width:5.91px;height:2.2px;background:rgba(66,130,190,.9);opacity:.55;"></div>
<div class="b" style="left:3479.06px;top:608.1px;width:7.88px;height:2.2px;background:rgba(200,200,200,.8);opacity:.55;"></div>
<div class="b" style="left:3486.94px;top:608.1px;width:7.88px;height:2.2px;background:rgba(190,100,190,.8);opacity:.55;"></div>
<div class="b" style="left:3496.79px;top:608.1px;width:7.88px;height:2.2px;background:rgba(170,195,160,.85);opacity:.55;"></div>
<div class="b" style="left:3506.64px;top:608.1px;width:1.97px;height:2.2px;background:rgba(220,190,40,.8);opacity:.55;"></div>
<div class="b" style="left:3400.26px;top:612px;width:11.82px;height:2.2px;background:rgba(66,130,190,.9);opacity:.55;"></div>
<div class="b" style="left:3414.05px;top:612px;width:15.76px;height:2.2px;background:rgba(66,130,190,.9);opacity:.55;"></div>
<div class="b" style="left:3431.78px;top:612px;width:13.79px;height:2.2px;background:rgba(200,200,200,.8);opacity:.55;"></div>
<div class="b" style="left:3445.57px;top:612px;width:3.94px;height:2.2px;background:rgba(220,190,40,.8);opacity:.55;"></div>
<div class="b" style="left:3451.48px;top:612px;width:1.97px;height:2.2px;background:rgba(220,190,40,.8);opacity:.55;"></div>
<div class="b" style="left:3408.14px;top:615.9px;width:25.61px;height:2.2px;background:rgba(200,200,200,.8);opacity:.55;"></div>
<div class="b" style="left:3435.72px;top:615.9px;width:9.85px;height:2.2px;background:rgba(200,200,200,.8);opacity:.55;"></div>
<div class="b" style="left:3400.26px;top:619.8px;width:1.97px;height:2.2px;background:rgba(220,190,40,.8);opacity:.55;"></div>
<div class="b" style="left:3392.38px;top:623.7px;width:5.91px;height:2.2px;background:rgba(200,200,200,.8);opacity:.55;"></div>
<div class="b" style="left:3392.38px;top:631.5px;width:11.82px;height:2.2px;background:rgba(66,130,190,.9);opacity:.55;"></div>
<div class="b" style="left:3404.2px;top:631.5px;width:1.97px;height:2.2px;background:rgba(190,100,190,.8);opacity:.55;"></div>
<div class="b" style="left:3400.26px;top:635.4px;width:7.88px;height:2.2px;background:rgba(66,130,190,.9);opacity:.55;"></div>
<div class="b" style="left:3410.11px;top:635.4px;width:17.73px;height:2.2px;background:rgba(140,200,235,.85);opacity:.55;"></div>
<div class="b" style="left:3429.81px;top:635.4px;width:25.61px;height:2.2px;background:rgba(190,130,105,.85);opacity:.55;"></div>
<div class="b" style="left:3455.42px;top:635.4px;width:1.97px;height:2.2px;background:rgba(200,200,200,.8);opacity:.55;"></div>
<div class="b" style="left:3408.14px;top:639.3px;width:5.91px;height:2.2px;background:rgba(66,130,190,.9);opacity:.55;"></div>
<div class="b" style="left:3416.02px;top:639.3px;width:45.31px;height:2.2px;background:rgba(200,200,200,.8);opacity:.55;"></div>
<div class="b" style="left:3461.33px;top:639.3px;width:13.79px;height:2.2px;background:rgba(66,130,190,.9);opacity:.55;"></div>
<div class="b" style="left:3408.14px;top:643.2px;width:5.91px;height:2.2px;background:rgba(66,130,190,.9);opacity:.55;"></div>
<div class="b" style="left:3416.02px;top:643.2px;width:45.31px;height:2.2px;background:rgba(200,200,200,.8);opacity:.55;"></div>
<div class="b" style="left:3461.33px;top:643.2px;width:13.79px;height:2.2px;background:rgba(66,130,190,.9);opacity:.55;"></div>
<div class="b" style="left:3400.26px;top:647.1px;width:11.82px;height:2.2px;background:rgba(66,130,190,.9);opacity:.55;"></div>
<div class="b" style="left:3392.38px;top:651px;width:1.97px;height:2.2px;background:rgba(190,100,190,.8);opacity:.55;"></div>
<div class="b" style="left:3384.5px;top:654.9px;width:1.97px;height:2.2px;background:rgba(220,190,40,.8);opacity:.55;"></div>
<div class="b" style="left:3384.5px;top:662.7px;width:11.82px;height:2.2px;background:rgba(66,130,190,.9);opacity:.55;"></div>
<div class="b" style="left:3398.29px;top:662.7px;width:13.79px;height:2.2px;background:rgba(66,130,190,.9);opacity:.55;"></div>
<div class="b" style="left:3414.05px;top:662.7px;width:15.76px;height:2.2px;background:rgba(200,200,200,.8);opacity:.55;"></div>
<svg class="b" style="left:490px;top:2058px" width="60" height="47" viewBox="490 2058 60 47"><g fill="none" stroke="#e9f1fb" stroke-width="3.8"><rect x="496.5" y="2065.5" width="45" height="32" rx="4"/><path d="M496.5 2076.3 L541.5 2076.3 M496.5 2087 L541.5 2087"/></g><g fill="#e9f1fb"><circle cx="532.5" cy="2071" r="2.2"/><circle cx="532.5" cy="2081.7" r="2.2"/><circle cx="532.5" cy="2092.3" r="2.2"/></g></svg>
<svg class="b" style="left:600px;top:2056px" width="45" height="48" viewBox="600 2056 45 48"><g fill="none" stroke="#b2c9e0" stroke-width="3"><circle cx="612.5" cy="2066" r="4.6"/><circle cx="630.4" cy="2074" r="4.6"/><circle cx="612" cy="2093.5" r="4.6"/><path d="M612.4 2070.6 L612.1 2089"/><path d="M630.4 2078.6 Q630 2084.5 622 2085.2 L612.3 2086"/></g></svg>
<svg class="b" style="left:790px;top:2058px" width="52" height="46" viewBox="790 2058 52 46"><g fill="none" stroke="#b2c9e0" stroke-width="3"><path d="M806.5 2063.2 L824.7 2063.2 L834.9 2072.5 L834.9 2090 L824.7 2099.3 L806.5 2099.3 L796.3 2090 L796.3 2072.5 Z"/><path d="M808.3 2074 L822.9 2088.6 M822.9 2074 L808.3 2088.6"/></g></svg>
<svg class="b" style="left:878px;top:2058px" width="52" height="46" viewBox="878 2058 52 46"><g fill="none" stroke="#b2c9e0" stroke-width="3" stroke-linejoin="round"><path d="M904 2064.5 L923.8 2098.3 L884.3 2098.3 Z"/><path d="M904 2075.5 L904 2087.5"/></g><circle cx="904" cy="2092.3" r="1.9" fill="#b2c9e0"/></svg>
<svg class="b" style="left:1002px;top:2058px" width="52" height="46" viewBox="1002 2058 52 46"><g fill="none" stroke="#b2c9e0" stroke-width="3" stroke-linecap="round"><path d="M1027.5 2078 L1027.5 2099"/><path d="M1019.8 2070.5 Q1016.5 2077 1019.8 2083.5 M1035.2 2070.5 Q1038.5 2077 1035.2 2083.5"/><path d="M1012.3 2066 Q1005.3 2077 1012.3 2088 M1042.7 2066 Q1049.7 2077 1042.7 2088"/></g><circle cx="1027.5" cy="2077" r="2.6" fill="#b2c9e0"/></svg>
<svg class="b" style="left:2683px;top:2058px" width="60" height="46" viewBox="2683 2058 60 46"><g fill="none" stroke="#b2c9e0" stroke-width="2.8" stroke-linecap="round"><path d="M2706 2073 Q2702 2081.5 2706 2090 M2719.5 2073 Q2723.5 2081.5 2719.5 2090"/><path d="M2699.3 2068.5 Q2692.3 2081.5 2699.3 2094.5 M2726.2 2068.5 Q2733.2 2081.5 2726.2 2094.5"/><path d="M2692.8 2065 Q2683.3 2081.5 2692.8 2098 M2732.7 2065 Q2742.2 2081.5 2732.7 2098"/></g><circle cx="2712.7" cy="2081.5" r="3" fill="#b2c9e0"/></svg>
<svg class="b" style="left:2912px;top:2060px" width="44" height="44" viewBox="2912 2060 44 44"><path d="M2917.5 2084.5 L2928 2097.5 L2950 2067" fill="none" stroke="#b2c9e0" stroke-width="3.2" stroke-linecap="round" stroke-linejoin="round"/></svg>
<svg class="b" style="left:3085px;top:2060px" width="47" height="40" viewBox="3085 2060 47 40"><g fill="none" stroke="#b2c9e0" stroke-width="2.6" stroke-linecap="round" stroke-linejoin="round"><path d="M3089 2081 L3096.5 2091 L3112.5 2068.5"/><path d="M3099.5 2080 L3108 2090.5 L3126 2068.5"/></g></svg>
<svg class="b" style="left:3296px;top:2060px" width="47" height="40" viewBox="3296 2060 47 40"><g fill="none" stroke="#b2c9e0" stroke-width="2.6" stroke-linecap="round" stroke-linejoin="round"><path d="M3300 2081 L3307.5 2091 L3323.5 2068.5"/><path d="M3310.5 2080 L3319 2090.5 L3337 2068.5"/></g></svg>
<svg class="b" style="left:3482px;top:2056px" width="48" height="50" viewBox="3482 2056 48 50"><g fill="none" stroke="#b2c9e0" stroke-width="3" stroke-linejoin="round"><path d="M3489.5 2094.5 L3522.5 2094.5 Q3517 2088 3517 2080 L3517 2075 Q3517 2063 3506 2063 Q3495 2063 3495 2075 L3495 2080 Q3495 2088 3489.5 2094.5 Z"/><path d="M3501.5 2095 Q3501.5 2100.5 3506 2100.5 Q3510.500 2100.5 3510.5 2095"/></g></svg>
<span class="t" id="badge7" style="left:548.0px;top:813.4px;font-size:26px;color:#ffffff;font-weight:700;">7</span>
<span class="t" id="explorer" style="left:661.5px;top:484.4px;font-size:32px;color:#85817e;transform:scaleX(0.8377);">EXPLORER</span>
<span class="t" id="openeditors" style="left:647.5px;top:566.9px;font-size:32px;color:#cbc7c2;font-weight:700;transform:scaleX(0.9431);">OPEN EDITORS</span>
<span class="t" id="standby" style="left:664.0px;top:633.9px;font-size:32px;color:#cbc7c2;font-weight:700;transform:scaleX(0.9521);">STANDBY</span>
<span class="t" id="row0" style="left:767.3px;top:713.1px;font-size:38px;color:#e2e2e2;transform:scaleX(1.0514);">public</span>
<span class="t" id="row1" style="left:767.3px;top:777.8px;font-size:38px;color:#e2c08d;transform:scaleX(0.9791);">src</span>
<span class="t" id="row2" style="left:789.3px;top:842.4px;font-size:38px;color:#e2e2e2;transform:scaleX(0.9360);">assets</span>
<span class="t" id="row3" style="left:813.3px;top:907.1px;font-size:38px;color:#e2e2e2;transform:scaleX(0.9716);">react.svg</span>
<span class="t" id="row4" style="left:790.0px;top:971.7px;font-size:38px;color:#73c991;transform:scaleX(1.0430);">component</span>
<span class="t" id="row5" style="left:813.3px;top:1036.4px;font-size:38px;color:#73c991;transform:scaleX(0.9572);">DateTimeText.css</span>
<span class="t" id="bU5" style="left:1136.8px;top:1038.2px;font-size:35.5px;color:#64ad80;transform:scaleX(0.9360);">U</span>
<span class="t" id="row6" style="left:813.3px;top:1101.0px;font-size:38px;color:#73c991;transform:scaleX(0.9690);">DateTimeText.jsx</span>
<span class="t" id="bU6" style="left:1136.8px;top:1102.8px;font-size:35.5px;color:#64ad80;transform:scaleX(0.9360);">U</span>
<span class="t" id="row7" style="left:813.3px;top:1165.7px;font-size:38px;color:#e2e2e2;transform:scaleX(0.9763);">fullScreenButton.css</span>
<span class="t" id="row8" style="left:813.3px;top:1230.3px;font-size:38px;color:#e2e2e2;transform:scaleX(0.9868);">fullScreenButton.jsx</span>
<span class="t" id="row9" style="left:790.0px;top:1295.0px;font-size:38px;color:#e2e2e2;transform:scaleX(0.9848);">database</span>
<span class="t" id="row10" style="left:790.0px;top:1359.6px;font-size:38px;color:#e2e2e2;transform:scaleX(0.9580);">App.css</span>
<span class="t" id="row11" style="left:790.0px;top:1424.3px;font-size:38px;color:#e2c08d;transform:scaleX(0.9829);">App.jsx</span>
<span class="t" id="bM11" style="left:1129.1px;top:1428.0px;font-size:33px;color:#b9a27c;font-weight:700;transform:scaleX(1.1818);">M</span>
<span class="t" id="row12" style="left:790.0px;top:1488.9px;font-size:38px;color:#e2e2e2;transform:scaleX(0.9545);">index.css</span>
<span class="t" id="row13" style="left:790.0px;top:1553.6px;font-size:38px;color:#e2e2e2;transform:scaleX(0.9794);">main.jsx</span>
<span class="t" id="row14" style="left:766.0px;top:1618.2px;font-size:38px;color:#e2e2e2;transform:scaleX(1.0120);">trash</span>
<span class="t" id="row15" style="left:767.0px;top:1682.9px;font-size:38px;color:#e2e2e2;transform:scaleX(0.9658);">.eslintrc.cjs</span>
<span class="t" id="row16" style="left:767.0px;top:1747.5px;font-size:38px;color:#e2e2e2;transform:scaleX(0.9819);">.firebaserc</span>
<span class="t" id="row17" style="left:767.0px;top:1812.2px;font-size:38px;color:#e2e2e2;transform:scaleX(1.0484);">.gitignore</span>
<span class="t" id="row18" style="left:766.0px;top:1876.8px;font-size:38px;color:#e2e2e2;transform:scaleX(0.9862);">firebase.json</span>
<span class="t" id="jsonic" style="left:707.5px;top:1875.3px;font-size:38px;color:#f2c314;transform:scaleX(1.2997);-webkit-text-stroke:.7px;">{}</span>
<span class="t" id="trunkcheck" style="left:648.0px;top:1936.6px;font-size:32px;color:#aeaaa6;font-weight:700;transform:scaleX(0.9439);">TRUNK CHECK</span>
<span class="t" id="trunkhelp" style="left:648.0px;top:2000.9px;font-size:32px;color:#aeaaa6;font-weight:700;transform:scaleX(0.9427);">TRUNK HELP &amp; FEEDBACK</span>
<span class="t" id="title" style="left:1687.0px;top:388.1px;font-size:35px;color:#d2d2d2;transform:scaleX(1.0081);">[Extension Development Host] component</span>
<span class="t" id="tab1" style="left:1303.7px;top:480.9px;font-size:37.5px;color:#e2c08d;transform:scaleX(0.9839);">App.jsx</span>
<span class="t" id="tab1m" style="left:1447.0px;top:483.9px;font-size:33.5px;color:#b5a07c;font-weight:700;transform:scaleX(1.1467);">M</span>
<span class="t" id="tab2" style="left:1658.0px;top:480.9px;font-size:37.5px;color:#73c991;transform:scaleX(0.9731);">DateTimeText.jsx</span>
<span class="t" id="tab2u" style="left:1950.5px;top:482.7px;font-size:35px;color:#64aa7f;transform:scaleX(0.9493);">U</span>
<span class="t" id="sb_main" style="left:651.5px;top:2064.2px;font-size:35px;color:#b2c9e0;transform:scaleX(1.0169);">main*</span>
<span class="t" id="sb_e0" style="left:850.3px;top:2064.2px;font-size:35px;color:#b2c9e0;transform:scaleX(0.9759);">0</span>
<span class="t" id="sb_w0" style="left:938.3px;top:2064.2px;font-size:35px;color:#b2c9e0;transform:scaleX(0.9759);">0</span>
<span class="t" id="sb_b0" style="left:1061.5px;top:2064.2px;font-size:35px;color:#b2c9e0;transform:scaleX(0.9759);">0</span>
<span class="t" id="sb_ln" style="left:2165.0px;top:2064.6px;font-size:35px;color:#b2c9e0;transform:scaleX(0.9452);">Ln 6, Col 1</span>
<span class="t" id="sb_br" style="left:2372.5px;top:2064.1px;font-size:31px;color:#b2c9e0;letter-spacing:10px;">{}</span>
<span class="t" id="sb_js" style="left:2426.5px;top:2064.6px;font-size:35px;color:#b2c9e0;transform:scaleX(0.9144);">JavaScript JSX</span>
<span class="t" id="sb_gl" style="left:2750.0px;top:2064.6px;font-size:35px;color:#b2c9e0;transform:scaleX(0.9617);">Go Live</span>
<span class="t" id="sb_sp" style="left:2965.0px;top:2064.6px;font-size:35px;color:#b2c9e0;transform:scaleX(0.9829);">Spell</span>
<span class="t" id="sb_pr" style="left:3139.0px;top:2064.6px;font-size:35px;color:#b2c9e0;transform:scaleX(1.0061);">Prettier</span>
<span class="t" id="sb_tr" style="left:3350.5px;top:2064.6px;font-size:35px;color:#b2c9e0;transform:scaleX(0.9754);">Trunk</span>
</body></html>
